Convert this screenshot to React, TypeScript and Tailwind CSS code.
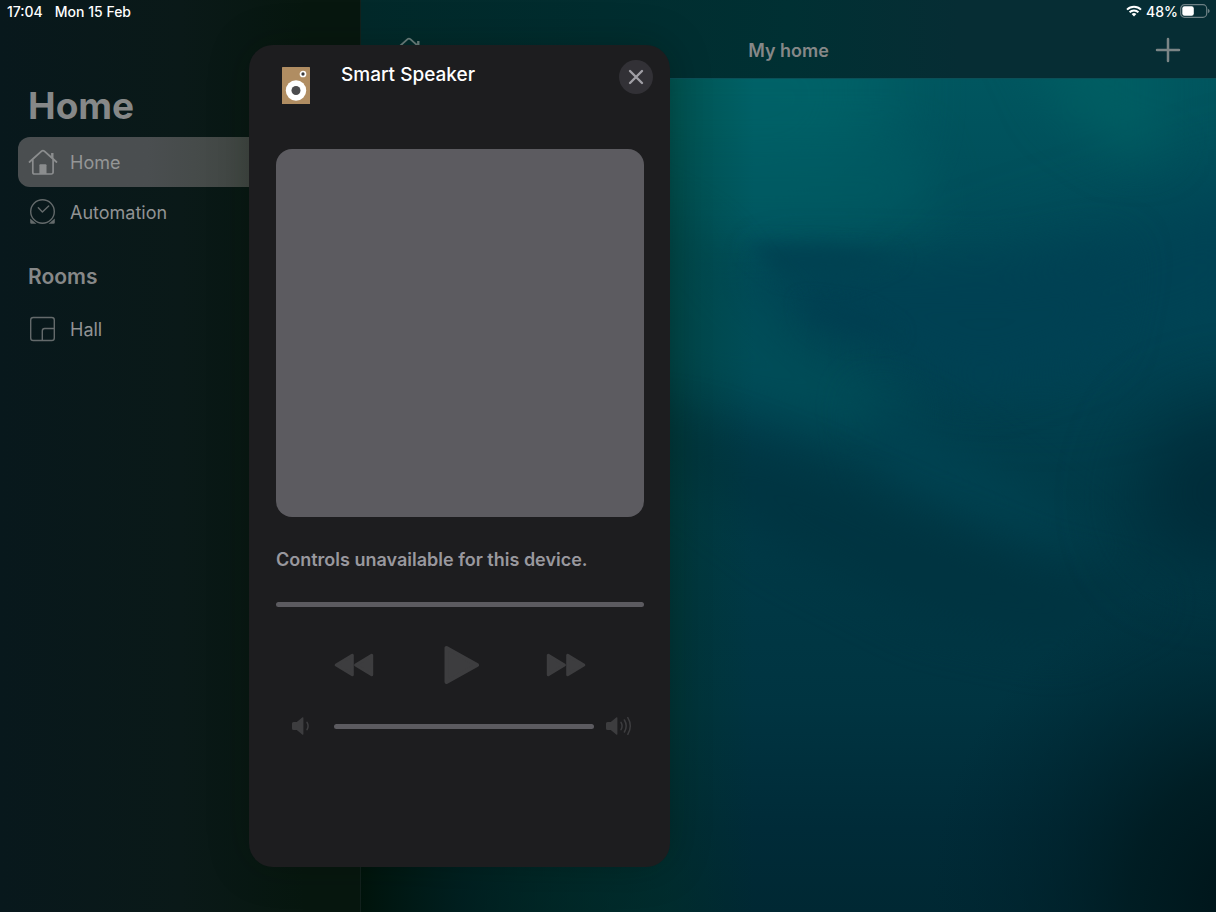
import type { ReactNode } from "react";

function HouseIcon({ className }: { className: string }) {
  return (
    <svg viewBox="0 0 30 28" className={className} fill="none" stroke="currentColor" aria-hidden="true">
      <path d="M1.5 14 13.6 3.2a2 2 0 0 1 2.7 0L28.500 14" strokeWidth="1.800" strokeLinecap="round" strokeLinejoin="round" />
      <path d="M4.800 11.500V24.200a1.800 1.800 0 0 0 1.800 1.800h16.700a1.800 1.800 0 0 0 1.800-1.800V11.500" strokeWidth="1.700" />
      <path d="M23.100 5h2.400v6.500l-2.400-2.200z" fill="currentColor" stroke="none" />
      <path d="M11.400 17.200a1 1 0 0 1 1-1h5.100a1 1 0 0 1 1 1V26h-7.100z" fill="currentColor" stroke="none" />
    </svg>
  );
}

function ClockIcon() {
  return (
    <svg viewBox="0 0 30 28" className="h-7 w-[30px]" fill="none" stroke="currentColor" strokeWidth="1.4" aria-hidden="true">
      <circle cx="14.500" cy="13.500" r="11.800" />
      <path d="m10.300 9.800 4.100 4.300 6.300-6.200" strokeLinecap="round" strokeLinejoin="round" />
      <path d="M2.200 20.500v4a1.200 1.200 0 0 0 1.200 1.200h5zM26.800 20.500v4a1.200 1.200 0 0 1-1.200 1.200h-5z" fill="currentColor" stroke="none" />
    </svg>
  );
}

function RoomIcon() {
  return (
    <svg viewBox="0 0 30 28" className="h-7 w-[30px]" fill="none" stroke="currentColor" strokeWidth="1.400" aria-hidden="true">
      <rect x="2.700" y="2.500" width="23.600" height="23" rx="2.600" />
      <path d="M26.300 13.500H16.700a2.400 2.400 0 0 0-2.400 2.400v9.600" />
    </svg>
  );
}

function SpeakerIcon() {
  return (
    <svg viewBox="0 0 28 37" className="h-[37px] w-7" aria-hidden="true">
      <rect width="28" height="37" rx="0.500" fill="#b08d62" />
      <circle cx="21" cy="7" r="2.500" fill="#3a3a3c" stroke="#fff" strokeWidth="1.700" />
      <circle cx="14" cy="23.500" r="10.200" fill="#fff" />
      <circle cx="14" cy="23.500" r="4.500" fill="#4c4c4e" />
    </svg>
  );
}

function RewindIcon() {
  return (
    <svg viewBox="0 0 40 24" className="h-6 w-10" fill="currentColor" stroke="currentColor" strokeWidth="3" strokeLinejoin="round" aria-hidden="true">
      <path d="M18.300 2.300v19.400L2.200 12zM37.700 2.300v19.400L21.600 12z" />
    </svg>
  );
}

function ForwardIcon() {
  return (
    <svg viewBox="0 0 40 24" className="h-6 w-10" fill="currentColor" stroke="currentColor" strokeWidth="3" strokeLinejoin="round" aria-hidden="true">
      <path d="M2.300 2.300v19.400L18.400 12zM21.700 2.300v19.400L37.800 12z" />
    </svg>
  );
}

function PlayIcon() {
  return (
    <svg viewBox="-3 0 38 40" className="h-10 w-[38px]" fill="currentColor" stroke="currentColor" strokeWidth="4" strokeLinejoin="round" aria-hidden="true">
      <path d="M2.500 3v34L33 20z" />
    </svg>
  );
}

function VolumeIcon({ waves }: { waves: 1 | 3 }) {
  return (
    <svg viewBox="0 0 28 20" className="h-5 w-7 shrink-0" fill="none" stroke="currentColor" strokeWidth="1.500" strokeLinecap="round" aria-hidden="true">
      <path
        d="M2.500 6H5.800L11.200 1.500a.7.7 0 0 1 1.200.5v16a.7.700 0 0 1-1.200.5L5.800 14H2.500A1.500 1.500 0 0 1 1 12.500v-5A1.500 1.500 0 0 1 2.500 6z"
        fill="currentColor"
        stroke="none"
      />
      <path d="M16 6.300q2.200 3.700 0 7.400" />
      {waves === 3 && <path d="M19.400 4q3.600 6 0 12M22.800 1.700q5 8.300 0 16.600" />}
    </svg>
  );
}

function WifiIcon() {
  return (
    <svg viewBox="0 0 16 12" className="h-3 w-4" fill="none" stroke="currentColor" strokeWidth="2" aria-hidden="true">
      <path d="M1 4.600a10 10 0 0 1 14 0M3.600 7.200a6.300 6.300 0 0 1 8.800 0" />
      <path d="M8 11.600 5.600 9.100a3.500 3.500 0 0 1 4.800 0z" fill="currentColor" stroke="none" />
    </svg>
  );
}

function BatteryIcon() {
  return (
    <svg viewBox="0 0 30 14" className="h-3.5 w-[30px]" aria-hidden="true">
      <rect x="0.700" y="0.700" width="26" height="12.600" rx="3.800" fill="none" stroke="#6d8084" strokeWidth="1.200" />
      <rect x="2.300" y="2.300" width="11.500" height="9.400" rx="2.200" fill="#fff" />
      <path d="M27.900 4.700q1.800.8 1.800 2.300t-1.800 2.300z" fill="#6d8084" />
    </svg>
  );
}

function Wallpaper() {
  return (
    <svg viewBox="0 0 855 833" preserveAspectRatio="none" className="absolute inset-0 h-full w-full" aria-hidden="true">
      <defs>
        <linearGradient id="sea" x1="0" y1="0" x2="0" y2="1">
          <stop offset="0" stopColor="#00565f" />
          <stop offset="0.180" stopColor="#004c59" />
          <stop offset="0.350" stopColor="#004150" />
          <stop offset="0.500" stopColor="#003b48" />
          <stop offset="0.750" stopColor="#003441" />
          <stop offset="0.900" stopColor="#002b38" />
          <stop offset="1" stopColor="#002833" />
        </linearGradient>
        <linearGradient id="moss" x1="0" y1="0" x2="1" y2="0">
          <stop offset="0" stopColor="#00140c" />
          <stop offset="0.120" stopColor="#001c18" stopOpacity="0.700" />
          <stop offset="0.360" stopColor="#003320" stopOpacity="0.320" />
          <stop offset="0.460" stopColor="#003320" stopOpacity="0" />
        </linearGradient>
        <radialGradient id="corner" gradientUnits="userSpaceOnUse" cx="900" cy="820" r="330">
          <stop offset="0" stopColor="#001317" />
          <stop offset="0.400" stopColor="#001a1f" stopOpacity="0.800" />
          <stop offset="1" stopColor="#002430" stopOpacity="0" />
        </radialGradient>
        <filter id="wide" x="-60%" y="-60%" width="220%" height="220%" colorInterpolationFilters="sRGB">
          <feGaussianBlur stdDeviation="40" />
        </filter>
        <filter id="soft" x="-60%" y="-60%" width="220%" height="220%" colorInterpolationFilters="sRGB">
          <feGaussianBlur stdDeviation="24" />
        </filter>
        <filter id="edge" x="-60%" y="-100%" width="220%" height="300%" colorInterpolationFilters="sRGB">
          <feGaussianBlur stdDeviation="9" />
        </filter>
      </defs>
      <rect width="855" height="833" fill="url(#sea)" />
      <path d="M600 200 760 150 920 90V230L720 300 520 290z" fill="#004254" filter="url(#wide)" />
      <path d="M200 -80H520L530 60 460 130H240z" fill="#006469" opacity="0.850" filter="url(#wide)" />
      <path d="M240 60H560L580 140 520 160H240z" fill="#005a62" opacity="0.700" filter="url(#soft)" />
      <path d="M650 -80H800L800 70 765 75 700 30z" fill="#005d62" filter="url(#soft)" />
      <path d="M405 186 500 186 640 190 760 170 740 270 620 310 520 272 455 240z" fill="#004153" filter="url(#soft)" />
      <path d="M384 166 470 168 540 178 480 205 420 196z" fill="#004252" filter="url(#edge)" />
      <path d="M440 222 500 230 540 255 490 262 450 246z" fill="#003f51" filter="url(#edge)" />
      <path d="M240 100 350 160 390 215 440 262 510 290 560 340 500 360 400 330 240 290z" fill="#00505a" opacity="0.800" filter="url(#soft)" />
      <path d="M500 310 580 350 660 410 760 480 640 450 520 400z" fill="#004352" opacity="0.900" filter="url(#soft)" />
      <path d="M220 335 340 350 450 390 560 440 680 490 800 520 700 570 560 540 420 470 340 410z" fill="#003340" opacity="0.800" filter="url(#soft)" />
      <path d="M920 320 810 340 770 420 800 480 920 500z" fill="#002a37" opacity="0.900" filter="url(#wide)" />
      <rect width="855" height="833" fill="url(#corner)" />
      <rect width="855" height="833" fill="url(#moss)" />
    </svg>
  );
}

function NavItem({ label, icon, active }: { label: string; icon: ReactNode; active?: boolean }) {
  return (
    <li>
      <a
        href="#"
        aria-current={active ? "page" : undefined}
        className={
          active
            ? "flex h-[50px] items-center gap-3 rounded-xl bg-linear-to-r from-[#4a4e50] from-40% to-[#394137] px-2.5 text-[#8b8d8e]"
            : "flex h-[50px] items-center gap-3 rounded-xl px-2.5 text-[#646a6b]"
        }
      >
        {icon}
        <span className={active ? "text-[18px] text-[#949696]" : "text-[18px] text-[#919394]"}>{label}</span>
      </a>
    </li>
  );
}

const trackClass =
  "block h-[5px] min-w-0 flex-1 appearance-none rounded-full bg-[#5c5b60] [&::-webkit-slider-thumb]:h-0 [&::-webkit-slider-thumb]:w-0 [&::-webkit-slider-thumb]:appearance-none";

export default function App() {
  return (
    <div className="relative flex min-h-screen bg-black font-['Inter','Liberation_Sans',sans-serif]">
      <aside className="w-[361px] shrink-0 border-r border-[#12211d] bg-linear-to-r from-[#08181c] via-[#0a1918] via-50% to-[#07170f] to-85%">
        <div className="flex h-[22px] items-center gap-3 px-[7px] text-[14px] font-medium text-white">
          <time>17:04</time>
          <span>Mon 15 Feb</span>
        </div>
        <nav className="px-[18px] pt-[60px]">
          <h1 className="px-2.5 text-[37px] leading-[48px] font-bold text-[#868888]">Home</h1>
          <ul className="pt-[7px]">
            <NavItem label="Home" icon={<HouseIcon className="h-7 w-[30px]" />} active />
            <NavItem label="Automation" icon={<ClockIcon />} />
          </ul>
          <h2 className="px-2.5 pt-[26px] pb-[13px] text-[21px] leading-7 font-semibold text-[#868888]">Rooms</h2>
          <ul>
            <NavItem label="Hall" icon={<RoomIcon />} />
          </ul>
        </nav>
      </aside>

      <main className="flex min-w-0 flex-1 flex-col">
        <header className="h-[79px] border-b border-[#0b5058] bg-linear-to-r from-[#02292a] via-[#003033] via-50% to-[#062d34] to-70%">
          <div className="flex h-[22px] items-center justify-end gap-1 pr-1.5 text-[14px] font-medium text-white">
            <WifiIcon />
            <div className="flex items-center gap-0.5">
              <span>48%</span>
              <BatteryIcon />
            </div>
          </div>
          <div className="grid h-[56px] grid-cols-[1fr_auto_1fr] items-center px-8">
            <a href="#" aria-label="Home" className="justify-self-start pl-px text-[#6f8280]">
              <HouseIcon className="h-7 w-[30px]" />
            </a>
            <h2 className="pt-px text-[18px] font-semibold text-[#868888]">My home</h2>
            <button type="button" aria-label="Add" className="justify-self-end text-[#7b8586]">
              <svg viewBox="0 0 32 32" className="h-8 w-8" stroke="currentColor" strokeWidth="2.500" strokeLinecap="round" aria-hidden="true">
                <path d="M16 5v22M5 16h22" />
              </svg>
            </button>
          </div>
        </header>
        <div className="relative flex-1 overflow-hidden">
          <Wallpaper />
        </div>
      </main>

      <section
        role="dialog"
        aria-label="Smart Speaker"
        className="absolute top-[45px] left-[249px] w-[421px] rounded-3xl bg-[#1d1d1f] pt-[15px] pr-[26px] pb-[131px] pl-[27px] shadow-[0_0_40px_rgba(0,16,6,0.25)]"
      >
        <div className="flex h-[89px] items-start">
          <div className="w-[65px] pt-[7px] pl-1.5">
            <SpeakerIcon />
          </div>
          <h2 className="flex-1 text-[19px] leading-[30px] font-medium text-white">Smart Speaker</h2>
          <button
            type="button"
            aria-label="Close"
            className="-mr-[9px] flex h-[34px] w-[34px] items-center justify-center rounded-full bg-[#323136] text-[#a09fa5]"
          >
            <svg viewBox="0 0 16 16" className="h-4 w-4" stroke="currentColor" strokeWidth="2.400" strokeLinecap="round" aria-hidden="true">
              <path d="m2 2 12 12M14 2 2 14" />
            </svg>
          </button>
        </div>
        <div className="aspect-square w-full rounded-2xl bg-[#5c5b60]" />
        <p className="pt-7 text-[18px] leading-[30px] font-semibold text-[#99989e]">Controls unavailable for this device.</p>
        <div className="flex pt-[27px]">
          <input type="range" aria-label="Playback position" disabled className={trackClass} />
        </div>
        <div className="flex items-center justify-between px-[58px] pt-[38px] text-[#3d3d3f]">
          <button type="button" aria-label="Rewind" disabled>
            <RewindIcon />
          </button>
          <button type="button" aria-label="Play" disabled>
            <PlayIcon />
          </button>
          <button type="button" aria-label="Fast forward" disabled>
            <ForwardIcon />
          </button>
        </div>
        <div className="flex items-center gap-[11px] pt-[31px] pr-[11px] pl-[15px] text-[#3d3d3f]">
          <VolumeIcon waves={1} />
          <div className="flex flex-1 pl-1">
            <input type="range" aria-label="Volume" disabled className={trackClass} />
          </div>
          <VolumeIcon waves={3} />
        </div>
      </section>
    </div>
  );
}
